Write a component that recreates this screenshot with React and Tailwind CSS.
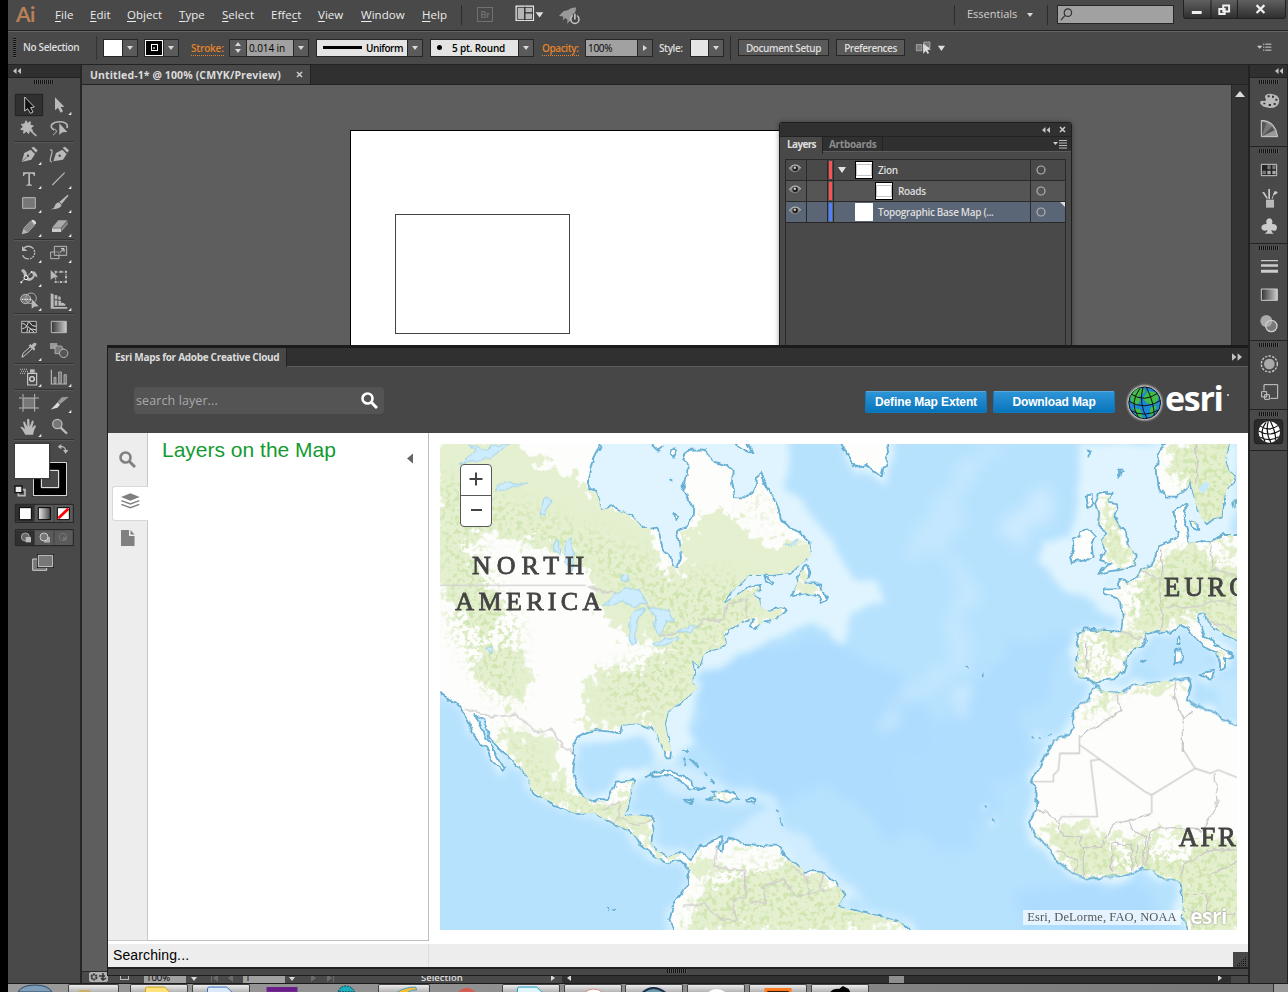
import React from "react";

const UI = "font-['Open_Sans',sans-serif]";

function Grip({ className = "" }) {
  return (
    <div
      className={`h-[4px] w-[20px] bg-[repeating-linear-gradient(90deg,#111_0_1px,#585858_1px_2px)] ${className}`}
    />
  );
}

function DoubleArrow({ right, className = "" }) {
  return (
    <svg viewBox="0 0 8 6" className={`h-[6px] w-[8px] ${right ? "rotate-180" : ""} ${className}`} fill="#c4c4c4">
      <path d="M3.5 0v6L0 3zM8 0v6L4.500 3z" />
    </svg>
  );
}

function Tri({ className = "" }) {
  return (
    <svg viewBox="0 0 6 4" className={`h-[4px] w-[6px] ${className}`} fill="#d8d8d8">
      <path d="M0 0h6L3 4z" />
    </svg>
  );
}

function Drop() {
  return (
    <div className="flex h-full w-[15px] shrink-0 items-center justify-center border-l border-[#262626] bg-[#5a5a5a]">
      <Tri />
    </div>
  );
}

/* ---------- Menu bar ---------- */

const menus = [
  ["", "F", "ile", "w-[35px]"],
  ["", "E", "dit", "w-[37px]"],
  ["", "O", "bject", "w-[52px]"],
  ["", "T", "ype", "w-[43px]"],
  ["", "S", "elect", "w-[49px]"],
  ["Effe", "c", "t", "w-[47px]"],
  ["", "V", "iew", "w-[43px]"],
  ["", "W", "indow", "w-[61px]"],
  ["", "H", "elp", "w-[39px]"],
];

function MenuBar() {
  return (
    <div className="flex h-[31px] shrink-0 items-start border-b border-[#232323] bg-[#494949]">
      <div className="ml-[8px] w-[39px] font-[Lato,sans-serif] text-[21px] leading-[27px] font-bold tracking-[-0.5px] text-[#b98058]">Ai</div>
      <div className={`flex h-[29px] items-center text-[11.5px] text-[#ececec] ${UI}`}>
        {menus.map(([a, k, b, w]) => (
          <div key={a + k + b} className={`${w} whitespace-nowrap tracking-[0.05px]`}>
            {a}
            <span className="underline underline-offset-2">{k}</span>
            {b}
          </div>
        ))}
      </div>
      <div className="mt-[5px] h-[20px] w-px bg-[#2c2c2c]" />
      <div className="mt-[7px] ml-[15px] flex h-[15px] w-[16px] items-center justify-center border border-[#707070] font-[Lato,sans-serif] text-[9px] font-bold text-[#707070]">Br</div>
      <svg viewBox="256 15 86 50" className="mt-[5px] ml-[22px] h-[17px] w-[29px]">
        <path d="M259 18h52v43h-52z" fill="#b5b5b5" stroke="#eee" strokeWidth="3" />
        <path d="M285 20v40M286 38h24" stroke="#2a2a2a" strokeWidth="4" />
        <path d="M263 22h45v36h-45z" fill="none" stroke="#333" strokeWidth="2.500" />
        <path d="M317 36h23l-11 16z" fill="#e0e0e0" />
      </svg>
      <svg viewBox="385 18 68 58" className="mt-[6px] ml-[14px] h-[20px] w-[23px]">
        <path d="M388 46l14-14 12-2q10-10 25-8-1 15-10 24l-3 10-14 14 1-12-6-5-8 7 2-11z" fill="#999" />
        <circle cx="435" cy="57" r="12" fill="#474747" stroke="#c8c8c8" strokeWidth="4.500" />
        <path d="M435 40v18" stroke="#474747" strokeWidth="12" />
        <path d="M435 40v17" stroke="#ddd" strokeWidth="4" />
      </svg>
      <div className="grow" />
      <div className="mt-[5px] h-[20px] w-px bg-[#2c2c2c]" />
      <div className={`mt-[5px] ml-[12px] w-[60px] text-[11px] leading-[18px] text-[#d0d0d0] ${UI}`}>Essentials</div>
      <Tri className="mt-[13px] w-[5px]" />
      <div className="mt-[5px] ml-[14px] h-[20px] w-px bg-[#2c2c2c]" />
      <div className="mt-[5px] ml-[9px] flex h-[19px] w-[117px] items-center border border-[#262626] bg-[#a1a1a1] pl-[2px]">
        <svg viewBox="0 0 14 14" className="size-[13px]" fill="none" stroke="#333" strokeWidth="1.300">
          <circle cx="8.500" cy="5" r="4" />
          <path d="M5.500 8L1 13" />
        </svg>
      </div>
      <div className="mr-[2px] ml-[9px] flex h-[19px] w-[103px] overflow-hidden rounded-b-[3px] border border-t-0 border-[#222] bg-linear-to-b from-[#606060] to-[#303030]">
        <svg viewBox="0 0 103 19" className="h-[19px] w-[103px]" fill="none">
          <path d="M27.500 0v19M54.500 0v19" stroke="#1e1e1e" />
          <path d="M8 11h10v3H8z" fill="#eee" />
          <path d="M40 5.500h6v6h-6zM36 9h5.500v5H36z" stroke="#eee" strokeWidth="2" />
          <path d="M74 5l8 8M82 5l-8 8" stroke="#eee" strokeWidth="2.300" />
        </svg>
      </div>
    </div>
  );
}

/* ---------- Control bar ---------- */

function ControlBar() {
  return (
    <div className={`flex h-[34px] shrink-0 items-center border-t border-b border-t-[#656565] border-b-[#232323] bg-[#494949] pb-px text-[11px] leading-[14px] font-semibold whitespace-nowrap text-[#dedede] ${UI}`}>
      <div className="ml-[5px] h-[20px] w-[3px] bg-[repeating-linear-gradient(180deg,#111_0_1px,#555_1px_2px)]" />
      <div className="mb-[2px] ml-[7px] w-[73px] text-[10px] tracking-[-0.35px]">No Selection</div>
      <div className="h-[24px] w-px bg-[#333]" />
      <div className="ml-[6px] flex h-[18px] w-[35px] border border-[#262626]">
        <div className="grow bg-white" />
        <Drop />
      </div>
      <div className="ml-[6px] flex h-[18px] w-[35px] border border-[#262626]">
        <div className="flex grow items-center justify-center border border-white bg-black">
          <div className="flex size-[7px] items-center justify-center border-[1.500px] border-white bg-black">
            <div className="size-[2px] bg-[#999]" />
          </div>
        </div>
        <Drop />
      </div>
      <div className="ml-[12px] w-[38px]">
        <span className="border-b border-dotted border-[#e5832a] text-[10px] tracking-[-0.2px] text-[#e5832a]">Stroke:</span>
      </div>
      <div className="flex h-[18px] w-[80px] border border-[#262626] font-normal text-black">
        <div className="flex w-[17px] flex-col items-center justify-center gap-[3px] border-r border-[#262626] bg-[#5a5a5a]">
          <Tri className="rotate-180" />
          <Tri />
        </div>
        <div className="grow bg-[#a1a1a1] pl-[2px] text-[10px] leading-[16px] tracking-[-0.1px]">0.014 in</div>
        <Drop />
      </div>
      <div className="ml-[7px] flex h-[18px] w-[107px] items-center border border-[#262626] bg-[#e4e4e4] text-[10px] text-black">
        <div className="ml-[6px] h-[3px] w-[39px] shrink-0 bg-black" />
        <div className="grow pl-[4px] tracking-[-0.45px]">Uniform</div>
        <Drop />
      </div>
      <div className="ml-[7px] flex h-[18px] w-[104px] items-center border border-[#262626] bg-[#e4e4e4] text-[10px] text-black">
        <div className="ml-[6px] size-[5px] rounded-full bg-black" />
        <div className="grow pl-[10px] tracking-[-0.2px]">5 pt. Round</div>
        <Drop />
      </div>
      <div className="ml-[8px] w-[43px]">
        <span className="border-b border-dotted border-[#e5832a] text-[10px] tracking-[-0.4px] text-[#e5832a]">Opacity:</span>
      </div>
      <div className="flex h-[18px] w-[68px] border border-[#262626] text-black">
        <div className="grow bg-[#a1a1a1] pl-[2px] text-[10px] leading-[16px] font-normal tracking-[-0.3px]">100%</div>
        <div className="flex h-full w-[15px] items-center justify-center border-l border-[#262626] bg-[#5a5a5a]">
          <Tri className="-rotate-90" />
        </div>
      </div>
      <div className="ml-[6px] w-[31px] text-[10px] tracking-[-0.4px]">Style:</div>
      <div className="flex h-[18px] w-[34px] border border-[#262626]">
        <div className="grow bg-[#e4e4e4]" />
        <Drop />
      </div>
      <div className="ml-[6px] h-[24px] w-px bg-[#2c2c2c]" />
      <div className="ml-[7px] flex h-[17px] w-[91px] items-center justify-center border border-[#262626] bg-[#5a5a5a] text-[10px] tracking-[-0.4px]">Document Setup</div>
      <div className="ml-[7px] flex h-[17px] w-[69px] items-center justify-center border border-[#262626] bg-[#5a5a5a] text-[10px] tracking-[-0.45px]">Preferences</div>
      <svg viewBox="165 117 96 46" className="ml-[9px] h-[15px] w-[32px]">
        <path d="M171 131h17v19h-17zM194 123h19v17h-19z" fill="#777" stroke="#bbb" strokeWidth="2.500" strokeDasharray="5 1" />
        <path d="M192 128v31l8-8 6 9 4-3-5-9 11-2z" fill="#ddd" />
        <path d="M237 135h22l-11 16z" fill="#ddd" />
      </svg>
      <div className="grow" />
      <svg viewBox="1190 130 45 26" className="mr-[16px] h-[9px] w-[15px]">
        <path d="M1190 138h16l-8 9z" fill="#ccc" />
        <path d="M1208 133h4m3 0h18M1208 142h4m3 0h18M1208 151h4m3 0h18" stroke="#ccc" strokeWidth="3" />
      </svg>
    </div>
  );
}

/* ---------- Toolbox ---------- */

const G = "#b9b9b9";

const toolGroups = [
  [
    [
      [42, 99, false, <><path d="M46 103h82v64h-82z" fill="#303030" stroke="#222" strokeWidth="3" /><path d="M74 111v42l9-7 8 14 8-4-7-13 11-2z" fill="#111" stroke="#e2e2e2" strokeWidth="2.500" /></>],
      [132, 99, true, <path d="M165 112v39l9-8 8 15 7-4-7-13 11-1z" fill={G} />],
    ],
    [
      [42, 171, false, <><path d="M78 182l4 8 9-5-1 10 10 3-8 6 6 8-10-1-2 10-7-7-8 6 1-10-10-2 8-7-6-8 10-1z" fill={G} stroke={G} strokeWidth="3" /><path d="M88 208l21 20" stroke={G} strokeWidth="5" /></>],
      [132, 171, false, <><path d="M163 210q-14-8-7-17 10-10 32-7 18 4 13 18" fill="none" stroke={G} strokeWidth="5" /><path d="M163 207q10 4 5 10t-9 8" fill="none" stroke={G} strokeWidth="3" /><path d="M178 190v35l9-8 15-1z" fill={G} /></>],
    ],
  ],
  [
    [
      [42, 249, true, <><path d="M65 306l8-27 19-10 13 13-11 17z" fill={G} /><path d="M94 263l7-3 12 11-5 7z" fill={G} /><path d="M66 305l15-15" stroke="#444" strokeWidth="2" /><circle cx="84" cy="287" r="3.500" fill="#444" /></>],
      [132, 249, false, <><path d="M160 304l8-25 19-10 13 13-11 17z" fill={G} /><path d="M188 263l7-3 12 11-5 7z" fill={G} /><path d="M150 271q8-4 6 6l-5 20q-2 8 5 9" fill="none" stroke={G} strokeWidth="3.500" /><circle cx="179" cy="287" r="3.500" fill="#444" /></>],
    ],
    [
      [42, 321, true, <path d="M69 337h36v11h-3q-1-7-7-7h-5v30q0 3 6 3v3H79v-3q6 0 6-3v-30h-5q-7 0-8 7h-3z" fill={G} />],
      [132, 321, true, <path d="M157 375l37-37" stroke={G} strokeWidth="3.500" />],
    ],
    [
      [42, 393, true, <path d="M68 413h38v32H68z" fill="#777" stroke={G} strokeWidth="3" />],
      [132, 393, true, <><path d="M203 404q4 1 1 5l-19 23-7-6z" fill={G} /><path d="M176 427l9 8q-5 14-34 13 12-2 13-10 3-9 12-11z" fill={G} /></>],
    ],
    [
      [42, 465, true, <><path d="M65 523l5-17 13 12z" fill={G} /><path d="M71 505l20-21 12 12-20 22z" fill="#888" stroke={G} strokeWidth="2" /><path d="M93 482l5-3q10 2 10 11l-4 5z" fill="#ddd" /></>],
      [132, 465, true, <><path d="M156 503l19-22h27l-19 22z" fill="#aaa" /><path d="M156 505h27v11h-27z" fill="#ccc" /><path d="M184 504l19-21v10l-19 23z" fill="#888" /></>],
    ],
  ],
  [
    [
      [42, 543, true, <><path d="M72 564a19 19 0 1 1-4 22" fill="none" stroke={G} strokeWidth="4" strokeDasharray="32 3 6 3 6 3 6 3 6 3" /><path d="M66 558v15h16z" fill={G} /></>],
      [132, 543, true, <><path d="M152 576h25v20h-25z" fill="none" stroke={G} strokeWidth="3" /><path d="M163 559h37v27h-37z" fill="#555" fillOpacity=".5" stroke={G} strokeWidth="3" /><path d="M180 577l11-10M183 566h9v9" fill="none" stroke="#ddd" strokeWidth="3" /></>],
    ],
    [
      [42, 615, true, <><path d="M63 632q6-8 13 0t4 13q3 12 13 8t3-14q3-10 10-2t6 16q-9-8-10 0-9 15-22 8T73 650q-1-12-10-18z" fill={G} /><path d="M62 668l34-33" stroke="#ddd" strokeWidth="2.500" /><circle cx="78" cy="653" r="6" fill="#444" stroke="#fff" strokeWidth="3" /><circle cx="64" cy="667" r="3" fill="#eee" /><circle cx="95" cy="636" r="3" fill="#eee" /></>],
      [132, 615, false, <><path d="M167 636h31v30h-31z" fill="none" stroke={G} strokeWidth="3" strokeDasharray="6 3" /><path d="M164 632h6v6h-6zM180 632h6v6h-6zM195 632h6v6h-6zM195 648h6v6h-6zM195 663h6v6h-6zM180 663h6v6h-6zM164 663h6v6h-6z" fill={G} /><path d="M152 630v29l8-6 14-2z" fill={G} /></>],
    ],
    [
      [42, 687, true, <><ellipse cx="77" cy="717" rx="15" ry="14" fill="#777" stroke={G} strokeWidth="3" /><ellipse cx="93" cy="715" rx="16" ry="16" fill="none" stroke={G} strokeWidth="2.500" /><path d="M66 718h30" stroke="#fff" strokeWidth="3" strokeDasharray="3 2" /><path d="M95 717v29l8-6 13-1z" fill={G} /></>],
      [132, 687, true, <><path d="M152 700l9 3v38h41v5h-50z" fill={G} /><path d="M164 705l8 1v12h-8zM164 721h8v16h-8zM175 709l7 1v9h-7zM175 722h8v6l9 1v8h-17zM186 730l10 1v6h-10z" fill={G} /></>],
    ],
  ],
  [
    [
      [42, 765, false, <><path d="M65 784h44v34H65z" fill="#333" stroke={G} strokeWidth="3" /><path d="M67 790q20 4 14 26M67 806q14-2 18-20M88 786q8 15 20 13M88 816q-3-14 20-6M84 800l18 16" fill="none" stroke="#e0e0e0" strokeWidth="3" /></>],
      [132, 765, false, <><path d="M154 784h45v34h-45z" fill="url(#tg)" stroke={G} strokeWidth="3" /><defs><linearGradient id="tg"><stop stopColor="#333" /><stop offset="1" stopColor="#ccc" /></linearGradient></defs></>],
    ],
    [
      [42, 12, true, <><path d="M66 67l3-12 22-20 6 6-22 20z" fill="none" stroke="#ccc" strokeWidth="3" /><path d="M86 32l16 15 4-5-4-5q12-10 5-13t-12 7l-4-4z" fill={G} /></>],
      [132, 12, false, <><path d="M150 24h22v18h-22z" fill="#999" /><path d="M165 33h20l7 15-10 8h-17z" fill="#777" stroke={G} strokeWidth="2.500" /><circle cx="191" cy="55" r="12.500" fill="#555" stroke={G} strokeWidth="3" /></>],
    ],
  ],
  [
    [
      [42, 90, true, <><path d="M83 115h27v35H83z" fill="none" stroke="#ccc" strokeWidth="3.500" /><path d="M90 103h14v10H90z" fill={G} /><circle cx="96" cy="132" r="7" fill="none" stroke="#ddd" strokeWidth="4" /><path d="M60 103h24M63 109h22M60 115h18" stroke="#aaa" strokeWidth="3.500" strokeDasharray="3 3" /></>],
      [132, 90, true, <><path d="M154 104v43h47" fill="none" stroke={G} strokeWidth="3.500" /><path d="M162 127h6v18h-6zM176 111h8v34h-8zM192 119h7v26h-7z" fill="#777" stroke={G} strokeWidth="2.500" /></>],
    ],
  ],
  [
    [
      [42, 168, false, <><path d="M69 189h35v31H69z" fill="#777" /><path d="M69 177v53M104 177v53M57 189h60M57 219h60" stroke={G} strokeWidth="3" strokeDasharray="9 2 60 0" /></>],
      [132, 168, true, <><path d="M207 185l-26 22-8-6 12-14z" fill="#999" /><path d="M173 202l7 7-8 9q-8 2-20 6z" fill="#ddd" /></>],
    ],
    [
      [42, 240, true, <path d="M76 299q-8-15-15-22 5-5 14 6l-6-22q5-4 7 2l6 13-1-22q6-5 7 0l1 21 7-18q6-2 5 4l-5 18 8-8q6 0 3 5-5 7-8 23z" fill={G} />],
      [132, 240, false, <><circle cx="172" cy="267" r="14" fill="#777" stroke={G} strokeWidth="4" /><path d="M182 278l19 18" stroke={G} strokeWidth="7" /></>],
    ],
  ],
];

function Tool({ x, y, tri, children }) {
  return (
    <svg viewBox={`${x} ${y} 90 72`} className="h-[24px] w-[30px]">
      {children}
      {tri && <path d={`M${x + 82} ${y + 56}v10h-9z`} fill="#e8e8e8" />}
    </svg>
  );
}

function Toolbox() {
  return (
    <div className="flex w-[74px] shrink-0 flex-col border-r-2 border-[#262626] bg-[#494949]">
      <div className="flex h-[13px] items-center border-b border-[#222] bg-[#303030] pl-[5px]">
        <DoubleArrow />
      </div>
      <div className="flex h-[15px] justify-center pt-[2px]">
        <Grip />
      </div>
      {toolGroups.map((g, i) => (
        <div key={i} className="ml-[6px]">
          {g.map((row, j) => (
            <div key={j} className="flex">
              {row.map(([x, y, tri, art]) => (
                <Tool key={x} x={x} y={y} tri={tri}>{art}</Tool>
              ))}
            </div>
          ))}
          <div className="h-[2px] w-[60px] border-t border-b border-t-[#333] border-b-[#585858]" />
        </div>
      ))}
      <svg viewBox="42 318 180 396" className="ml-[6px] h-[132px] w-[60px]">
        <path d="M98 380h104v104H98z" fill="#000" stroke="#222" strokeWidth="3" />
        <path d="M100 382h100v100H100z" fill="#000" stroke="#fff" strokeWidth="3" />
        <path d="M124 406h52v52h-52z" fill="#494949" stroke="#fff" strokeWidth="3" />
        <path d="M43 325h106v106H43z" fill="#fff" stroke="#222" strokeWidth="3" />
        <path d="M181 335q15-2 16 13" fill="none" stroke={G} strokeWidth="3.500" />
        <path d="M173 335l11-8v16zM197 356l-8-11h16z" fill={G} />
        <path d="M55 464h20v18H55z" fill="none" stroke={G} strokeWidth="5" />
        <path d="M45 453h21v20H45z" fill="#eee" stroke="#111" strokeWidth="4" />
        <path d="M46 508h174v54H46z" fill="#5a5a5a" stroke="#222" strokeWidth="3" />
        <path d="M48 510h56v50H48z" fill="#303030" />
        <path d="M162 510v52" stroke="#333" strokeWidth="2" />
        <path d="M58 518h36v36H58z" fill="#fff" stroke="#000" strokeWidth="3" />
        <defs><linearGradient id="sw"><stop stopColor="#eee" /><stop offset="1" stopColor="#444" /></linearGradient></defs>
        <path d="M115 518h36v36h-36z" fill="url(#sw)" stroke="#000" strokeWidth="3" />
        <path d="M172 518h36v36h-36z" fill="#fff" stroke="#000" strokeWidth="3" />
        <path d="M175 550l30-29" stroke="#f00" strokeWidth="8" />
        <path d="M46 584h174v48H46z" fill="#5a5a5a" stroke="#222" strokeWidth="3" />
        <path d="M48 586h56v44H48z" fill="#303030" />
        <path d="M162 586v44" stroke="#333" strokeWidth="2" />
        <circle cx="76" cy="606" r="12" fill="#666" stroke="#aaa" strokeWidth="3" />
        <path d="M77 606h16v16H77z" fill="#bbb" />
        <path d="M132 606h18v17h-18z" fill="#aaa" />
        <circle cx="132" cy="606" r="12" fill="#777" stroke="#ccc" strokeWidth="3" />
        <circle cx="189" cy="606" r="11" fill="none" stroke="#747474" strokeWidth="3" />
        <path d="M189 606h11v10h-11z" fill="#747474" />
        <path d="M98 672h42v34H98z" fill="#777" stroke="#ccc" strokeWidth="3" />
        <path d="M115 661h43v34h-43z" fill="#777" stroke="#222" strokeWidth="8" />
        <path d="M115 661h43v34h-43z" fill="#777" stroke="#ccc" strokeWidth="3" />
      </svg>
    </div>
  );
}

/* ---------- Right dock ---------- */

const globeGrid = (cx, cy, r) =>
  `M${cx - r} ${cy - 0.1 * r}Q${cx} ${cy + 0.5 * r} ${cx + r} ${cy - 0.15 * r}M${cx - r * 0.85} ${cy - r * 0.55}Q${cx} ${cy} ${cx + r * 0.8} ${cy - r * 0.6}M${cx - r * 0.85} ${cy + r * 0.5}Q${cx} ${cy + r * 0.95} ${cx + r * 0.88} ${cy + r * 0.45}M${cx - 0.1 * r} ${cy - r}Q${cx - 0.4 * r} ${cy} ${cx + 0.15 * r} ${cy + r}M${cx - r * 0.3} ${cy - r * 0.9}Q${cx - r} ${cy} ${cx - r * 0.4} ${cy + r * 0.9}M${cx + 0.1 * r} ${cy - r}Q${cx + 0.6 * r} ${cy} ${cx + 0.6 * r} ${cy + r * 0.8}`;

const dockGroups = [
  ["h-[69px]", [
    [80, <><path d="M150 100q28 2 28 21-2 22-28 22-28-2-30-17 1-6 12-4 10 0 4-8-5-13 14-14z" fill={G} /><path d="M143 105h6v6h-6zM156 106h6v6h-6zM166 115h6v6h-6zM161 128h6v6h-6zM146 131h7v6h-7zM130 127h6v5h-6z" fill="#333" /></>],
    [164, <><path d="M124 180q42 0 49 49h-49z" fill="#999" stroke="#ccc" strokeWidth="3" /><path d="M126 228v-44l14 3zM126 228l30-30 8 12z" fill="#555" /><path d="M126 228l14-41 16 11z" fill="#777" /></>],
  ]],
  ["h-[97px]", [
    [286, <><path d="M124 311h46v34h-46z" fill="#222" stroke="#ccc" strokeWidth="3" /><path d="M142 314h10v12h-10zM127 330h11v11h-11zM157 314h10v12h-10z" fill="#777" /><path d="M142 330h10v11h-10zM157 330h10v11h-10z" fill="#aaa" /></>],
    [370, <><path d="M138 417h24v24h-24z" fill={G} /><path d="M145 415v-30h5v30zM140 414l-14-20 7 1 11 18zM155 414l8-22q12 0 9 6l-11 6-3 10z" fill="#ccc" /></>],
    [454, <path d="M148 473q13 2 8 17 15-1 15 11-2 14-17 7 0 8 7 11h-27q8-3 9-11-16 6-19-6 0-12 16-12-5-14 8-17z" fill="#ccc" />],
  ]],
  ["h-[97px]", [
    [577, <path d="M123 598h51v4h-51zM123 611h51v7h-51zM123 627h51v9h-51z" fill="#ccc" />],
    [661, <><defs><linearGradient id="dg"><stop stopColor="#333" /><stop offset="1" stopColor="#ccc" /></linearGradient></defs><path d="M124 685h48v34h-48z" fill="url(#dg)" stroke="#ccc" strokeWidth="3" /></>],
    [745, <><circle cx="139" cy="781" r="18" fill="#aaa" /><circle cx="154" cy="796" r="17" fill="#aaa" fillOpacity=".5" stroke="#ccc" strokeWidth="4" /></>],
  ]],
  ["h-[69px]", [
    [868, <><circle cx="148" cy="910" r="16" fill="#aaa" /><circle cx="148" cy="910" r="24" fill="none" stroke="#ccc" strokeWidth="4" strokeDasharray="7 4" /></>],
    [952, <><path d="M132 990v-18h41v41h-22" fill="none" stroke="#ccc" strokeWidth="3" /><path d="M125 993h15v16h-15zM134 1002h14v14h-14z" fill="none" stroke="#ccc" strokeWidth="3" /></>],
  ]],
  ["h-[41px]", [
    [1075, <><rect x="103" y="1077" width="85" height="72" rx="8" fill="#2b2b2b" stroke="#1e1e1e" strokeWidth="3" /><circle cx="148" cy="1114" r="32" fill="#fff" /><path d={globeGrid(148, 1114, 32)} fill="none" stroke="#111" strokeWidth="3.500" /></>],
  ]],
];

function Dock() {
  return (
    <div className="flex w-[40px] shrink-0 flex-col border-r border-l-2 border-[#222] bg-[#494949]">
      <div className="flex h-[13px] items-center justify-end border-b border-[#222] bg-[#303030] pr-[4px]">
        <DoubleArrow />
      </div>
      {dockGroups.map(([h, icons], i) => (
        <div key={i} className={`${h} flex flex-col border-b border-[#222]`}>
          <div className="flex h-[9px] shrink-0 justify-center pt-[2px]">
            <Grip />
          </div>
          {icons.map(([y, art]) => (
            <svg key={y} viewBox={`90 ${y} 111 84`} className="h-[28px] w-[37px] shrink-0">{art}</svg>
          ))}
        </div>
      ))}
    </div>
  );
}

/* ---------- Layers panel ---------- */

function Eye() {
  return (
    <svg viewBox="0 0 12 9" className="h-[9px] w-[12px]">
      <path d="M0 5Q6-3 12 4 6 12 0 5z" fill="#8a8a8a" />
      <circle cx="6.200" cy="4.500" r="2.800" fill="#222" />
      <circle cx="5.800" cy="3.800" r="1.200" fill="#ccc" />
      <path d="M0 4.500Q6-2.500 12 4" fill="none" stroke="#bbb" />
    </svg>
  );
}

function LayerRow({ name, indent, arrow, bar, bg, thumb, corner }) {
  return (
    <div className={`flex h-[21px] border-b border-[#292929] ${bg}`}>
      <div className="flex w-[21px] items-center justify-center border-r border-[#292929] pr-[2px] pb-[3px]"><Eye /></div>
      <div className="w-[21px] border-r border-[#292929]" />
      <div className={`my-px ml-px w-[3px] ${bar}`} />
      <div className="ml-px flex grow items-center border-l border-[#292929]">
        <div className={`${indent} flex h-full shrink-0 items-center pl-[4px]`}>
          {arrow && <svg viewBox="0 0 8 6" className="h-[6px] w-[8px]"><path d="M0 0h8L4 6z" fill="#e4e4e4" /></svg>}
        </div>
        <div className={`flex size-[18px] shrink-0 items-center justify-center border bg-white ${thumb ? "border-black" : "border-transparent"}`}>
          {thumb && <div className="h-[12px] w-full border border-[#c4c4c4]" />}
        </div>
        <div className="pl-[5px] text-[10px] font-semibold tracking-[-0.32px] whitespace-nowrap text-[#dedede]">{name}</div>
      </div>
      <div className="flex w-[35px] border-l border-[#292929] pl-[4px]">
        <svg viewBox="0 0 10 10" className="mt-[5px] ml-px size-[10px]"><circle cx="5" cy="5" r="4" fill="none" stroke="#b0b0b0" strokeWidth="1.200" /></svg>
        <div className="grow" />
        {corner && <svg viewBox="0 0 5 5" className="size-[5px]"><path d="M0 0h5v5z" fill="#ddd" /></svg>}
      </div>
    </div>
  );
}

function LayersPanel() {
  return (
    <div className={`absolute top-[57px] left-[697px] flex h-[240px] w-[293px] flex-col rounded-t-[3px] border border-[#1e1e1e] bg-[#494949] shadow-[0_0_5px_#0006] ${UI}`}>
      <div className="flex h-[13px] items-center justify-end gap-[9px] rounded-t-[3px] bg-[#303030] pr-[5px]">
        <DoubleArrow />
        <svg viewBox="0 0 7 7" className="size-[7px]"><path d="M1 1l5 5M6 1L1 6" stroke="#ccc" strokeWidth="1.500" /></svg>
      </div>
      <div className="flex h-[16px] shrink-0 border-t border-b border-t-[#222] border-b-[#5c5c5c] bg-[#303030] text-[10px] leading-[15px] font-bold">
        <div className="h-[17px] w-[43px] shrink-0 border-r border-[#222] bg-[#494949] pl-[7px] tracking-[-0.65px] text-[#dedede]">Layers</div>
        <div className="w-[60px] border-r border-[#222] pl-[6px] tracking-[-0.3px] text-[#8c8c8c]">Artboards</div>
        <div className="grow" />
        <svg viewBox="0 0 14 9" className="mt-[3px] mr-[4px] h-[9px] w-[14px]"><path d="M0 2h5L2.500 5z" fill="#ccc" /><path d="M6 .5h8M6 3h8M6 5.500h8M6 8h8" stroke="#bbb" /></svg>
      </div>
      <div className="mx-[5px] mt-[7px] grow border border-[#292929]">
        <LayerRow name="Zion" indent="w-[21px]" arrow thumb bar="bg-[#f85454]" bg="bg-[#494949]" />
        <LayerRow name="Roads" indent="w-[41px]" thumb bar="bg-[#f85454]" bg="bg-[#555555]" />
        <LayerRow name="Topographic Base Map (..." indent="w-[21px]" bar="bg-[#4f80ff]" bg="bg-[#5a6576]" corner />
      </div>
    </div>
  );
}

/* ---------- Map ---------- */

const AMERICA =
  "M0 0L490 0 490 20 470 60 460 100 458 150 480 155 492 185 495 210 530 200 570 220 600 240 620 265 665 260 672 290 680 330 700 350 705 375 728 382 735 350 730 310 722 275 750 262 770 230 772 195 755 170 738 155 750 120 755 80 742 60 750 30 790 28 810 30 830 65 870 75 890 90 888 130 895 155 900 175 925 175 950 155 965 110 972 98 985 130 1010 165 1025 200 1035 235 1060 262 1100 285 1120 305 1125 345 1112 360 1090 375 1060 400 1000 405 940 405 910 435 880 460 862 492 900 468 940 440 975 435 975 450 950 462 970 480 975 500 1000 515 1045 500 1050 515 1010 540 980 545 955 570 945 555 955 535 930 540 905 555 880 565 866 590 870 610 850 625 815 632 800 650 790 680 768 660 775 700 770 720 785 745 750 775 715 800 695 820 687 850 695 890 708 930 706 955 695 955 675 920 665 885 650 865 630 860 605 850 555 855 550 880 525 872 490 868 455 875 425 890 412 915 415 950 408 1000 420 1040 440 1070 470 1082 515 1080 530 1050 540 1025 595 1022 585 1060 575 1100 565 1128 600 1125 640 1130 655 1145 650 1180 645 1210 665 1235 700 1250 735 1235 755 1250 765 1258 790 1220 825 1205 855 1188 860 1200 845 1225 860 1240 862 1210 880 1195 930 1215 1000 1220 1035 1220 1040 1245 1075 1270 1110 1295 1165 1300 1200 1330 1225 1365 1205 1400 1252 1412 1312 1425 1390 1445 1430 1480 720 1480 700 1440 710 1400 740 1360 760 1330 755 1290 748 1270 730 1262 715 1262 700 1270 665 1258 640 1235 615 1215 600 1190 575 1170 530 1150 500 1135 475 1118 425 1122 390 1110 340 1085 285 1050 275 1010 240 970 195 930 160 890 145 840 115 825 130 855 160 905 180 945 205 985 200 992 170 965 150 925 120 900 105 860 85 820 60 790 20 765 0 745Z";

const ISLES_WEST =
  "M1112 375L1120 400 1108 430 1155 430 1160 455 1172 480 1155 490 1145 470 1110 460 1065 468 1080 440 1095 395ZM985 410L1015 425 1010 432 990 425ZM628 1015L660 995 700 992 740 1010 775 1035 805 1048 760 1045 730 1020 690 1005 650 1008ZM830 1055L880 1055 910 1075 870 1085 835 1080 810 1075 840 1070ZM930 1077l25 0 0 8-22 0zM745 1078l28 5-10 6-15-3zM735 925l22 8-2-10M742 955l10 20M765 960l25 25M805 1000l5 10M825 1020l10 12M1020 1110l8 5M1032 1130l8 30M645 12l20 20 20-15M710 25l14 10-10 18-10-12zM880 0L950 42 930 0ZM700 115l12 4M715 215l15 18-12 10zM515 1400l8 12M535 1408l6 4";

const EUROPE =
  "M985 0L955 40 950 90 955 140 975 170 1010 170 1045 140 1050 120 1060 160 1070 200 1085 235 1100 250 1120 235 1145 230 1150 180 1160 150 1180 120 1185 110 1165 90 1155 60 1170 0ZM1210 285L1150 285 1110 305 1080 300 1050 310 1040 265 1030 235 1042 205 1038 188 1005 215 1005 260 1020 275 1005 300 980 310 955 320 945 345 935 375 905 385 890 410 865 425 835 420 840 445 790 445 795 465 830 475 845 500 848 540 843 575 790 572 735 568 712 580 718 610 710 650 705 680 715 712 745 715 765 735 790 720 825 718 850 695 860 665 865 645 900 620 918 600 915 580 950 572 985 578 1020 552 1040 560 1060 590 1100 625 1130 640 1140 665 1140 690 1155 680 1155 655 1180 650 1160 635 1120 605 1095 585 1075 545 1080 520 1095 520 1110 555 1150 580 1210 610ZM1080 700L1125 692 1118 722ZM1005 630L1025 628 1025 665 1005 670ZM1010 595L1022 590 1020 615 1012 615ZM780 160L815 158 805 185 832 190 820 230 835 255 855 280 860 315 890 340 888 365 885 380 840 390 800 395 775 405 790 385 815 370 780 360 795 330 785 300 805 280 770 255 775 220 765 190ZM745 265L765 285 755 310 758 345 735 360 695 368 690 350 705 330 695 300 720 290 725 270ZM1050 240l20 5 5 25-15-5zM740 170l15-5 2 30-12 10zM840 85l8 10-8 15zM742 30l8 8-2 14M1180 185l6-5-2 22z";

const AFRICA =
  "M765 740L800 755 840 758 880 735 960 725 1045 715 1050 740 1040 780 1080 805 1125 815 1150 840 1210 865 1210 1480 1050 1480 1025 1430 1030 1380 1025 1330 1005 1318 970 1320 940 1290 900 1285 870 1300 820 1310 765 1312 740 1318 700 1300 650 1265 625 1225 580 1180 570 1145 588 1110 590 1060 575 1030 580 1010 610 960 635 910 665 895 690 875 700 860 700 820 720 795 745 780Z";

const GREENLAND = "M0 0L25 50 50 82 80 75 100 95 125 110 130 85 145 45 140 0ZM575 890l8 5M600 895l8 6M625 885l8-6M380 682l6 2M428 700l6 5M435 1100l5 5M460 1138l5 5M900 665l20-8";

const LAKES =
  "M505 495L530 470 570 440 610 450 635 490 600 498 560 485 530 495ZM600 510L630 508 600 545 600 605 585 612 578 560 585 525ZM635 500L700 512 715 545 690 540 670 590 655 560 660 530ZM655 612L690 595 730 590 715 605 665 620ZM720 575L760 555 780 558 765 575ZM385 310L405 290 415 340 405 400 390 370ZM350 330L365 295 375 345ZM70 70L100 55 120 30 100 12 140 30 200 12 220 12 160 55 120 60ZM175 160L205 125 270 132 230 140ZM312 225L328 175 345 180 330 222ZM560 405l14 0 0 20-12 0zM145 618l25 0-5 20zM1045 318l45-25-12 18z";

function MapView() {
  return (
    <svg viewBox="12 12 2391 1458" className="block h-[486px] w-[797px]">
      <defs>
        <filter id="rough" x="-5%" y="-5%" width="110%" height="110%">
          <feTurbulence type="fractalNoise" baseFrequency=".035" numOctaves="2" seed="4" />
          <feDisplacementMap in="SourceGraphic" scale="20" xChannelSelector="R" yChannelSelector="G" />
        </filter>
        <filter id="ragged" x="-5%" y="-5%" width="110%" height="110%">
          <feTurbulence type="fractalNoise" baseFrequency=".03" numOctaves="4" seed="9" />
          <feDisplacementMap in="SourceGraphic" scale="110" xChannelSelector="R" yChannelSelector="G" />
        </filter>
        <filter id="speck" x="-5%" y="-5%" width="110%" height="110%">
          <feTurbulence type="fractalNoise" baseFrequency=".07" numOctaves="4" seed="12" />
          <feColorMatrix values="0 0 0 0 0  0 0 0 0 0  0 0 0 0 0  8 0 0 0 -4.1" result="n" />
          <feGaussianBlur in="SourceGraphic" stdDeviation="30" result="s" />
          <feComposite in="s" in2="n" operator="in" />
        </filter>
        <filter id="soft" x="-20%" y="-20%" width="140%" height="140%">
          <feTurbulence type="fractalNoise" baseFrequency=".012" numOctaves="3" seed="3" result="t" />
          <feDisplacementMap in="SourceGraphic" in2="t" scale="50" xChannelSelector="R" yChannelSelector="G" />
          <feGaussianBlur stdDeviation="11" />
        </filter>
        <filter id="haze" x="-30%" y="-30%" width="160%" height="160%">
          <feTurbulence type="fractalNoise" baseFrequency=".01" numOctaves="3" seed="6" result="t" />
          <feDisplacementMap in="SourceGraphic" in2="t" scale="120" xChannelSelector="R" yChannelSelector="G" />
          <feGaussianBlur stdDeviation="18" />
        </filter>
        <clipPath id="land">
          <path d={AMERICA} />
          <path d={ISLES_WEST} />
          <path d={EUROPE} transform="translate(1212)" />
          <path d={AFRICA} transform="translate(1212)" />
        </clipPath>
      </defs>
      <rect x="0" y="0" width="2420" height="1490" fill="#b7e2fe" />
      <g filter="url(#haze)">
        <path d="M780 730Q840 640 1130 590L1300 680 1430 720 1500 900 1380 1200 1200 1060 940 1050 800 930Z" fill="#addcfe" />
        <path d="M1700 620L1900 600 1850 760 1740 850 1780 960 1700 1050 1600 1240 1400 1180 1360 960 1500 860 1640 740Z" fill="#afddfe" />
        <path d="M1740 1340l200-20 180 20 60 60 20 90-420 0z" fill="#addcfe" />
        <path d="M1420 330L1560 60 1700 12 1580 150 1530 330 1600 400 1610 620 1560 690 1400 790 1340 900 1330 850 1530 640 1550 500 1540 350Z" fill="#c2e7fe" />
        <path d="M1700 280l80-130 80-20-10 90-100 90zM1540 760l50 10 0 90-40-40z" fill="#cbeaff" />
      </g>
      <g filter="url(#soft)" fill="#dff4fe" stroke="#dff4fe" strokeLinejoin="round">
        <path d="M430 0H1040L1060 150 1150 270 1250 420 1330 430 1330 480 1250 520 1225 600 1130 545 1020 580 900 650 790 700 750 800 770 900 700 960 640 960 600 900 400 900Z" strokeWidth="10" />
        <path d="M630 960L720 960 880 1040 1020 1070 1060 1170 1210 1290 1300 1400 1050 1250 880 1180 1010 1100 860 1090 700 1060Z" strokeWidth="4" fillOpacity=".6" strokeOpacity=".3" />
        <path d="M430 1070L520 1060 540 1000 620 960 640 1000 590 1020 500 1110Z" />
        <path d={AMERICA} strokeWidth="14" fill="none" />
        <path d="M1930 12H2400V420H2020L2060 540 1920 460 1870 430 1815 370 1830 300 1900 290 1930 200Z" />
        <path d={EUROPE} transform="translate(1212)" strokeWidth="20" />
        <path d={AFRICA} transform="translate(1212)" strokeWidth="26" />
        <path d={GREENLAND} transform="translate(1212)" strokeWidth="24" />
      </g>
      <g filter="url(#soft)" fill="#b7e2fe">
        <path d="M440 950l80-40 90-10 40 50-10 20-80 20-60 50-50-10z" />
        <path d="M2160 600l120-20 60 110-130 20-60-30z" fill="#bde5fe" />
        <path d="M2320 720l90 0 0 120-40-10z" fill="#c3e8fe" />
      </g>
      <g filter="url(#rough)" fill="#fdfdfc" stroke="#66afd5" strokeWidth="5.500" strokeLinejoin="round">
        <path d={AMERICA} />
        <path d={ISLES_WEST} />
        <path d={EUROPE} transform="translate(1212)" />
        <path d={AFRICA} transform="translate(1212)" />
        <path d={GREENLAND} transform="translate(1212)" />
      </g>
      <g clipPath="url(#land)">
        <g filter="url(#ragged)" fill="#e4f0d0">
          <path d="M0 0L230 0 300 60 420 120 500 190 640 250 690 400 740 400 750 280 790 230 880 210 950 290 1010 310 1130 310 1130 400 900 420 1080 520 900 560 850 640 780 700 780 780 690 830 720 960 640 870 440 860 440 760 500 680 600 700 680 640 650 600 540 580 480 480 440 400 360 360 250 300 130 280 80 330 150 420 200 500 160 590 100 560 40 470 0 440Z" />
          <path d="M130 610L230 620 290 700 270 800 190 770 110 700ZM200 850L260 900 350 870 360 940 380 1050 520 1090 600 1020 590 1120 670 1130 650 1200 740 1240 700 1270 560 1170 440 1130 300 1060 200 910Z" />
          <path d="M820 1340L1060 1260 1250 1370 1420 1470 740 1480 780 1400ZM780 1230L860 1290 820 1330 760 1300ZM870 1200l100 20-60 20z" />
          <path d="M1090 390l30 40 50 30-80 10zM680 1000l100 40M830 1060l60 5-10 15-40 0z" />
        </g>
        <g filter="url(#ragged)" fill="#e3efcd" transform="translate(1212)">
          <path d="M990 10L1200 0 1200 250 1060 260 1050 110 980 90ZM780 170l60 30-10 60 60 90-80 40-10-80zM720 570L740 700 720 710 700 600ZM760 580L930 580 850 650ZM740 690l110-10-20 30-90 0z" />
          <path d="M860 430L980 380 970 320 1070 310 1120 370 1210 400 1210 640 1090 530 990 530 970 590 860 560 910 500ZM1110 300l100 0 0 60zM1090 590l60 60-20 0z" />
          <path d="M720 840L790 750 850 740 800 800ZM880 730l140-5-20 30-100 0zM590 1160L720 1150 790 1190 900 1190 980 1170 1210 1210 1210 1480 1040 1480 1020 1330 960 1310 900 1290 720 1320Z" />
        </g>
        <g filter="url(#ragged)" fill="#fdfdfc">
          <path d="M130 290L340 320 440 380 480 440 150 430 100 330ZM2035 1210l40 0-5 70-40-10zM2150 1190l150 10-80 70-70-20z" />
          <path d="M660 620l60-10-30 20zM600 830l60-20-20 20z" />
        </g>
        <g filter="url(#speck)" fill="#cbe2a6" fillOpacity=".8">
          <path d="M0 100L250 200 420 260 620 340 720 420 850 400 960 440 960 520 860 600 760 700 770 780 680 820 520 830 500 700 700 620 600 480 400 330 100 250 180 420 250 540 250 760 180 790 40 560Z" />
          <path d="M180 830L260 880 300 980 400 1060 560 1120 650 1200 440 1130 280 1040Z" />
          <path d="M840 1270L1050 1270 1240 1370 1350 1470 740 1470Z" />
          <path d="M2190 10h220v250h-120zM2100 380L2300 310 2420 400V620L2300 520 2180 560 2060 540ZM1980 200l60 20 50 150-60 10zM1930 580h180l-100 120h-80z" />
          <path d="M1930 820l90-80 40 20-90 90zM1810 1170L2210 1230 2420 1200V1480H2250L2200 1320 1960 1320Z" />
          <path d="M900 120l100 60 40 80-80-20z" fillOpacity=".5" />
        </g>
        <g filter="url(#rough)" fill="none" stroke="#cdc9ca" strokeWidth="4">
          <path d="M450 436L500 455 590 470 640 500 680 540 670 590 780 560 800 540 860 540 880 490 930 480 930 530M85 805L170 830 240 825 310 880 345 865 380 920 415 942M500 1110l30-20 20 0 0 40-20 20M560 1130l40 30 50-20M845 1220l-10 60 50 10 40 0 0 60M740 1400l60-10 60 50 40 0-10-60 40-10 0-60M980 1340l60-20 40 50 40-10-10-60-50-20M980 1340l10 50-50 0M1110 1300l10 60 60-10M1160 1300l-10 50" />
          <path transform="translate(1212)" d="M718 890L840 815 835 765M1030 930V830L1000 770 1010 725M1030 840L1055 810M935 1120L870 1140 820 1155 790 1195M865 1140L880 1175 920 1190 905 1280M1125 1000L1132 1100 1100 1145 1090 1170 960 1160 930 1180 915 1280M590 1110L620 1115 660 1150 665 1185 720 1190 730 1220 780 1220 790 1200M650 1230l60 30-5 40M730 1220v90M815 1300l0-90 60 0 0 80M890 1210v80M1020 1310l20-40 60-40 90 0M1120 1300l70-30M1040 1360h60v60h90M1060 1400l0 60" />
          <path transform="translate(1212)" d="M740 600l0 100M840 575l75 25M900 390l60 30 0 50 10 60-10 40M965 330l0 80M1110 305l10 80 80 30M980 500h90l60-20 70 20M1070 12l0 120M1100 540l100 40" />
        </g>
        <path d="M12 436H450" stroke="#d3d0d1" strokeWidth="4" />
        <path transform="translate(1212)" fill="none" stroke="#cdc9ca" strokeWidth="4" d="M718 885V940H660L655 990 640 1005V1025H580M720 915L915 1055 935 1065 1065 985 1030 930M780 958L752 962 772 1130H665L655 1145M935 1065L935 1120M1065 985L1110 1000 1135 990 1210 1020" />
      </g>
      <path d={LAKES} fill="#cdecfd" stroke="#a3d3ea" strokeWidth="3" filter="url(#rough)" />
      <path transform="translate(1212)" d="M1075 145l20-20 15 8-20 30z" fill="#c4e9fd" />
      <g fill="#444" stroke="#444" strokeWidth="2.400" className="font-['Liberation_Serif',serif]" fontSize="78">
        <text x="108" y="402" textLength="336">NORTH</text>
        <text x="58" y="510" textLength="438">AMERICA</text>
        <text x="2184" y="467" fontSize="80" letterSpacing="12">EURO</text>
        <text x="2228" y="1217" fontSize="80" letterSpacing="8">AFR</text>
      </g>
    </svg>
  );
}

/* ---------- Esri panel ---------- */

function EsriWord({ className }) {
  return <span className={`text-white ${UI} ${className}`}>esri</span>;
}

function EsriPanel() {
  return (
    <div className="absolute top-[280px] left-[25px] flex h-[631px] w-[1141px] flex-col border-b border-l border-[#1e1e1e] bg-[#474747]">
      <div className="h-[3px] shrink-0 bg-[#1b1b1b]" />
      <div className={`flex h-[19px] shrink-0 items-center border-b border-[#5c5c5c] bg-[#303030] ${UI}`}>
        <div className="h-[19px] w-[179px] shrink-0 border-r border-[#222] bg-[#474747] pl-[7px] text-[10px] leading-[19px] font-bold tracking-[-0.3px] whitespace-nowrap text-[#dcdcdc]">Esri Maps for Adobe Creative Cloud</div>
        <div className="grow" />
        <DoubleArrow right className="mr-[6px] h-[8px] w-[10px]" />
      </div>
      <div className="flex h-[66px] shrink-0 items-center font-['Liberation_Sans',sans-serif]">
        <div className="ml-[26px] flex h-[27px] w-[250px] items-center rounded-[4px] bg-[#545454] pr-[6px] pl-[2px]">
          <span className={`pt-[3px] text-[12.500px] tracking-[0.1px] text-[#a9a9a9] ${UI}`}>search layer...</span>
          <div className="grow" />
          <svg viewBox="0 0 17 17" className="size-[17px]" fill="none" stroke="#fff"><circle cx="6.500" cy="6.500" r="5" strokeWidth="2.600" /><path d="M10 10l6 6" strokeWidth="3" /></svg>
        </div>
        <div className="grow" />
        <div className="mt-[3px] flex gap-[6px] text-[12px] leading-[20px] font-bold tracking-[-0.12px] text-white">
          <div className="h-[22px] w-[122px] rounded-[2px] border border-[#1478bd] border-t-[#56a8dc] bg-linear-to-b from-[#2d94d6] to-[#0475bd] text-center">Define Map Extent</div>
          <div className="h-[22px] w-[122px] rounded-[2px] border border-[#1478bd] border-t-[#56a8dc] bg-linear-to-b from-[#2d94d6] to-[#0475bd] text-center">Download Map</div>
        </div>
        <svg viewBox="860 126 112 118" className="mt-[4px] ml-[11px] h-[39px] w-[38px] shrink-0">
          <defs><filter id="glow"><feGaussianBlur stdDeviation="3" /></filter></defs>
          <circle cx="915" cy="186" r="53" fill="#ddd" filter="url(#glow)" />
          <circle cx="915" cy="186" r="48" fill="#1b87d8" stroke="#111" strokeWidth="3" />
          <path d="M872 170q10-25 28-28 20 0 16 12l-18 12 4 14-12 14-14-6zM925 150l22 4 10 16-10 22-24-4-14-16zM878 200l24 6 8 26-18-6zM932 200l20-6-8 24-14 10z" fill="#3fbd45" />
          <path d={globeGrid(915, 186, 48)} fill="none" stroke="#111" strokeWidth="3" />
        </svg>
        <EsriWord className="mt-[-4px] ml-px w-[62px] shrink-0 text-[34px] leading-[40px] font-bold tracking-[-1.3px]" />
        <div className="mt-[-10px] mr-[19px] size-[2px] shrink-0 bg-[#bbb]" />
      </div>
      <div className="flex h-[511px] shrink-0 bg-white">
        <div className="h-[508px] w-[40px] border-r border-b border-[#c8c8c8] bg-[#ededed]">
          <div className="flex h-[52px] items-center justify-center">
            <svg viewBox="0 0 17 17" className="mr-px size-[17px]" fill="none" stroke="#808080"><circle cx="6.500" cy="6.500" r="5" strokeWidth="2.600" /><path d="M10 10l6 6" strokeWidth="3" /></svg>
          </div>
          <div className="mt-px ml-[4px] flex h-[35px] w-[36px] items-center justify-center rounded-l-[3px] border border-r-0 border-[#d8d8d8] bg-white">
            <svg viewBox="364 473 57 48" className="mt-[-6px] h-[16px] w-[19px]"><path d="M392 474l28 11-28 11-28-11z" fill="#808080" /><path d="M365 496l27 10 27-10M365 507l27 10 27-10" fill="none" stroke="#808080" strokeWidth="4.500" /></svg>
          </div>
          <svg viewBox="0 0 14 16" className="mt-[9px] ml-[13px] h-[16px] w-[14px]"><path d="M0 0h8v6h5.500v10H0zM9.500 0v4.500h4z" fill="#808080" /></svg>
        </div>
        <div className="flex h-[508px] w-[281px] justify-between border-r border-b border-[#bdbdbd] pl-[14px] font-['Liberation_Sans',sans-serif]">
          <div className="pt-[4px] text-[21px] leading-[26px] whitespace-nowrap text-[#139b30]">Layers on the Map</div>
          <svg viewBox="0 0 6 10" className="mt-[20px] mr-[15px] h-[11px] w-[6px]"><path d="M6 0v10L0 5z" fill="#666" /></svg>
        </div>
        <div className="relative mt-[11px] ml-[11px] h-[486px] w-[797px] overflow-hidden">
          <MapView />
          <div className="absolute top-[20px] left-[20px] flex h-[63px] w-[32px] flex-col rounded-[4px] border border-[#57585a] bg-white">
            <svg viewBox="0 0 30 61" className="h-[61px] w-[30px]"><path d="M0 30.500h30" stroke="#57585a" /><path d="M8.500 14h13M15 7.500v13M10 45h11" stroke="#444" strokeWidth="2" /></svg>
          </div>
          <div className="absolute right-[56px] bottom-[5px] flex h-[15px] w-[158px] items-center justify-center bg-[#ffffffaa] font-['Liberation_Serif',serif] text-[12.500px] tracking-[0.1px] whitespace-nowrap text-[#555]">Esri, DeLorme, FAO, NOAA</div>
          <EsriWord className="absolute right-[10px] bottom-[1px] text-[21px] leading-[26px] font-bold tracking-[-0.5px] [text-shadow:0_0_2px_#777]" />
        </div>
      </div>
      <div className="flex h-[23px] shrink-0 justify-between bg-[#ededed]">
        <div className="w-[321px] border-r border-[#ddd] pl-[5px] font-['Liberation_Sans',sans-serif] text-[14px] leading-[23px] tracking-[0.12px] text-black">Searching...</div>
        <div className="mt-[8px] h-[15px] w-[15px] bg-[#474747]">
          <svg viewBox="0 0 15 15" className="size-[15px]"><path d="M4 13.500h9M6 11.500h7M8 9.500h5M10 7.500h3M12 5.500h1" stroke="#111" strokeDasharray="1 1" /></svg>
        </div>
      </div>
      <div className="flex grow justify-center border-t-2 border-[#222] bg-[#474747]"><Grip className="mr-[2px]" /></div>
    </div>
  );
}

/* ---------- Bottom bars ---------- */

function StatusBar() {
  return (
    <div className={`flex h-[12px] shrink-0 items-start border-t border-[#2a2a2a] bg-[#4a4a4a] text-[9.500px] leading-[11px] whitespace-nowrap ${UI}`}>
      <div className="ml-[7px] h-[10px] w-[19px] rounded-[2px] bg-[#b0b0b0]">
        <svg viewBox="0 0 19 10" className="h-[10px] w-[19px]"><circle cx="5" cy="5" r="2.500" fill="none" stroke="#333" strokeWidth="2" strokeDasharray="2 .6" /><path d="M10 4h6M14 1v7M12 6l2 2 3-2" fill="none" stroke="#333" strokeWidth="1.500" /></svg>
      </div>
      <div className="ml-[12px] h-[8px] w-[9px] border border-t-0 border-[#bbb]" />
      <div className="ml-[15px] h-[11px] w-[42px] bg-[#a1a1a1] pl-[2px] text-black">100%</div>
      <Tri className="mt-[5px] ml-[5px]" />
      <svg viewBox="0 0 30 8" className="mt-[2px] ml-[10px] h-[8px] w-[30px]" fill="#6c6c6c"><path d="M4 0h1v8H4zM11 0v8L6 4zM26 0v8l-5-4z" /></svg>
      <div className="ml-[6px] h-[11px] w-[42px] bg-[#a1a1a1] pl-[2px] text-black">1</div>
      <Tri className="mt-[5px] ml-[4px]" />
      <svg viewBox="0 0 30 8" className="mt-[2px] ml-[14px] h-[8px] w-[30px]" fill="#6c6c6c"><path d="M2 0v8l5-4zM18 0v8l5-4zM24 0h1v8h-1z" /></svg>
      <div className="ml-[82px] w-[46px] font-semibold text-[#dedede]">Selection</div>
      <div className="grow" />
      <Tri className="mt-[4px] mr-[6px] -rotate-90" />
    </div>
  );
}

function HScroll() {
  return (
    <div className="flex h-[12px] w-[686px] shrink-0 items-center border-t border-[#2a2a2a] bg-[#303030]">
      <Tri className="ml-[4px] rotate-90" />
      <div className="ml-[317px] h-full w-[15px] bg-[#8f8f8f]" />
      <div className="grow" />
      <Tri className="mr-[8px] -rotate-90" />
      <div className="h-full w-[17px] bg-[#484848]" />
    </div>
  );
}

const tasks = [
  ["ml-[60px] w-[51px]", <path d="M10 5h12v3h-12z" fill="#c9b06a" />],
  ["ml-[11px] w-[58px]", <><path d="M15 8V4q0-2 2-2h18l6 6z" fill="#ffe27a" stroke="#caa018" /></>],
  ["ml-[4px] w-[58px]", <path d="M15 8V4q0-2 2-2h18l6 6z" fill="#dce9fb" stroke="#3a6ec0" />],
  ["ml-[4px] w-[58px]", <path d="M13 3h32v5H13z" fill="#6a1d8a" />, true],
  ["ml-[3px] w-[58px]", <path d="M24 8q2-6 8-6t9 6z" fill="#19aebb" stroke="#093c55" strokeDasharray="2 1" />, true],
  ["ml-[5px] w-[52px]", <path d="M18 8q8-6 20-6l1 3q-6-1-10 3z" fill="#f2c12e" stroke="#4d94cf" />],
  ["ml-[6px] w-[64px]", <path d="M23 8q8-8 18 0z" fill="#d9574b" />, true],
  ["ml-[2px] w-[58px]", <path d="M15 8V4q0-2 2-2h18l6 6z" fill="#e0f6fb" stroke="#159fc0" />],
  ["ml-[4px] w-[58px]", <path d="M20 8q9-8 20 0z" fill="#fff" stroke="#d08a80" />],
  ["ml-[3px] w-[58px]", <path d="M17 8q11-10 24 0z" fill="#6f9aac" stroke="#172d4b" strokeWidth="2" />],
  ["ml-[4px] w-[58px]", <path d="M20 8q9-8 20 0z" fill="#fff" />],
  ["ml-[4px] w-[58px]", <><path d="M15 3h28v6H15z" fill="#ff7c1f" /><path d="M18 6h22v3H18z" fill="#3a1d06" /></>],
  ["ml-[4px] w-[58px]", <path d="M18 8q4-5 10-4l4-3 6 3 2 4z" fill="#000" />],
];

function Taskbar() {
  return (
    <div className="flex h-[9px] shrink-0 overflow-hidden border-t border-[#1c1c1c] bg-linear-to-r from-[#9a9a9a] via-[#8c8c8c] to-[#777]">
      <svg viewBox="0 0 34 8" className="mr-[-44px] ml-[10px] h-[8px] w-[34px] shrink-0"><path d="M0 8Q4 1 17 1t17 7z" fill="#7d9cb8" stroke="#2b4a66" /></svg>
      {tasks.map(([cls, art, flat], i) => (
        <div key={i} className={`${cls} shrink-0 ${flat ? "" : "rounded-t-[2px] border border-b-0 border-[#444] bg-linear-to-b from-[#ececec] to-[#b4b4b4]"}`}>
          <svg viewBox="0 0 58 8" className="h-[8px] w-[56px]">{art}</svg>
        </div>
      ))}
      <div className="grow" />
      <div className="w-[15px] border-l border-[#333] bg-[#999]" />
    </div>
  );
}

export default function App() {
  return (
    <div className="flex h-[992px] w-[1288px] overflow-hidden bg-black">
      <div className="w-[8px] shrink-0 bg-black" />
      <div className="flex w-[1280px] flex-col">
        <MenuBar />
        <ControlBar />
        <div className="flex h-[918px] shrink-0">
          <Toolbox />
          <div className="relative flex w-[1166px] shrink-0 flex-col bg-[#5e5e5e]">
            <div className="flex h-[20px] shrink-0 border-b border-[#222] bg-[#303030]">
              <div className={`flex h-[19px] w-[229px] items-center justify-between border-r border-[#222] bg-[#494949] pr-[7px] pl-[8px] text-[10.500px] font-bold tracking-[0.12px] whitespace-nowrap text-[#dcdcdc] ${UI}`}>
                <span className="pt-[2px]">Untitled-1* @ 100% (CMYK/Preview)</span>
                <svg viewBox="0 0 7 7" className="size-[7px]"><path d="M1 1l5 5M6 1L1 6" stroke="#ccc" strokeWidth="1.500" /></svg>
              </div>
            </div>
            <div className="flex grow overflow-hidden">
              <div className="mt-[45px] ml-[268px] w-[500px] shrink-0 border-t border-l border-black bg-white pt-[83px] pl-[44px]">
                <div className="h-[120px] w-[175px] border border-[#444]" />
              </div>
              <div className="grow" />
              <div className="flex w-[17px] justify-center border-l border-[#2a2a2a] bg-[#343434] pt-[6px]">
                <svg viewBox="0 0 10 6" className="h-[6px] w-[10px]"><path d="M5 0l5 6H0z" fill="#ddd" /></svg>
              </div>
            </div>
            <div className="flex">
              <div className="w-[480px] shrink-0"><StatusBar /></div>
              <HScroll />
            </div>
            <LayersPanel />
            <EsriPanel />
          </div>
          <Dock />
        </div>
        <Taskbar />
      </div>
    </div>
  );
}
